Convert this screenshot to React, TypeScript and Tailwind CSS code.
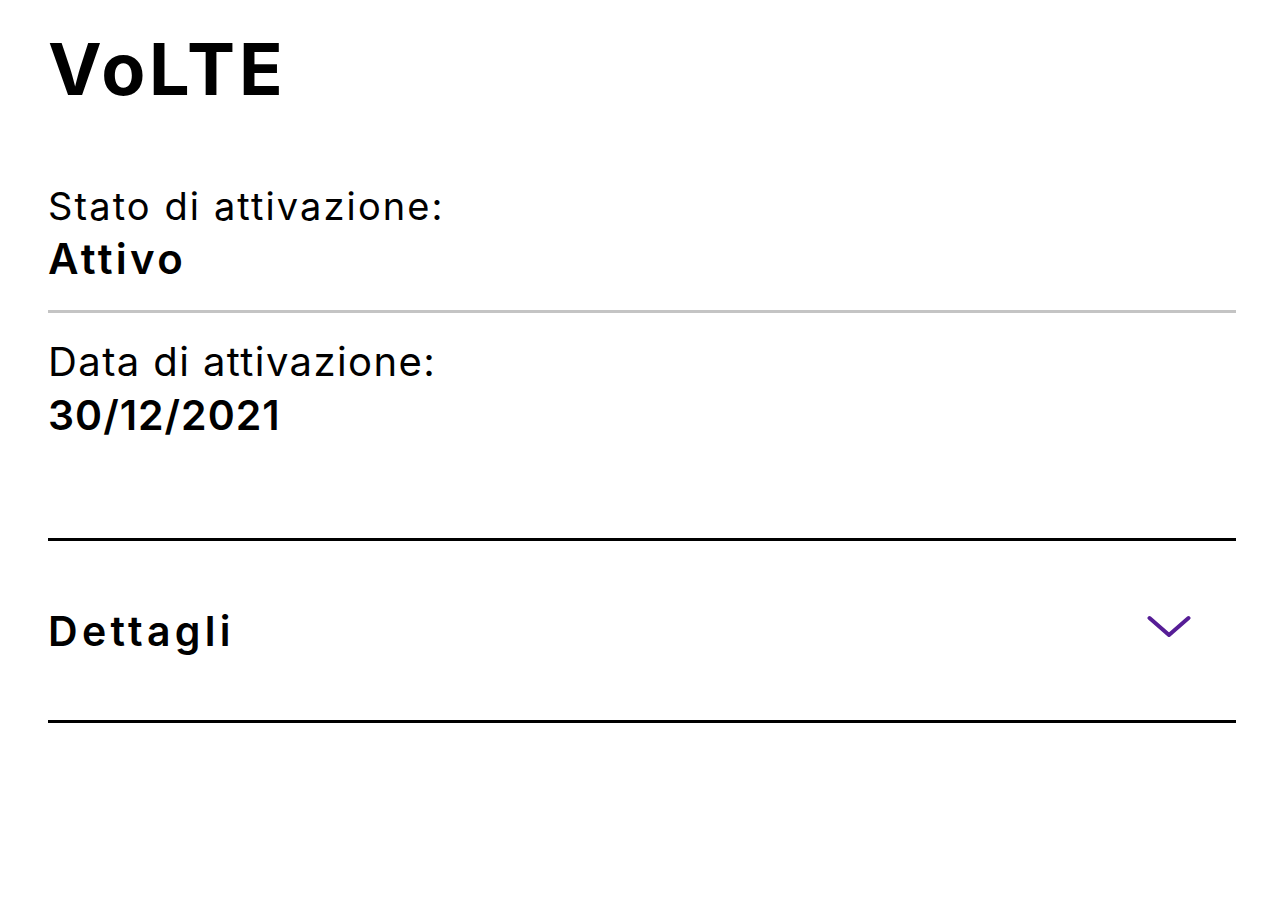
import React from "react";

export default function App() {
  return (
    <div className="w-[1284px] h-[904px] bg-white px-12 text-black font-['Inter',sans-serif]">
      <h1 className="pt-[33px] text-[72px] leading-[72px] font-bold tracking-[3.8px]">VoLTE</h1>
      <div className="mt-[77px] flex flex-col gap-[5px]">
        <p className="text-[38px] leading-[48px] font-normal tracking-[2.1px]">Stato di attivazione:</p>
        <p className="text-[42px] leading-[48px] font-semibold tracking-[3.3px]">Attivo</p>
      </div>
      <div className="mt-[27px] h-[3px] bg-[#c4c4c4]" />
      <div className="mt-[25px] flex flex-col gap-[5px]">
        <p className="text-[40px] leading-[48px] font-normal tracking-[1.4px]">Data di attivazione:</p>
        <p className="text-[41px] leading-[48px] font-semibold tracking-[1px]">30/12/2021</p>
      </div>
      <div className="mt-[99px] h-[3px] bg-black" />
      <div className="h-[179px] flex items-center justify-between pr-[45px]">
        <span className="text-[41px] leading-[48px] font-semibold tracking-[4.3px]">Dettagli</span>
        <svg width="44" height="24" viewBox="0 0 44 24" fill="none" className="-mt-[7px]">
          <path d="M2.5 3 L22 20 L41.5 3" stroke="#561d96" strokeWidth="4" strokeLinecap="round" strokeLinejoin="round" />
        </svg>
      </div>
      <div className="h-[3px] bg-black" />
    </div>
  );
}
